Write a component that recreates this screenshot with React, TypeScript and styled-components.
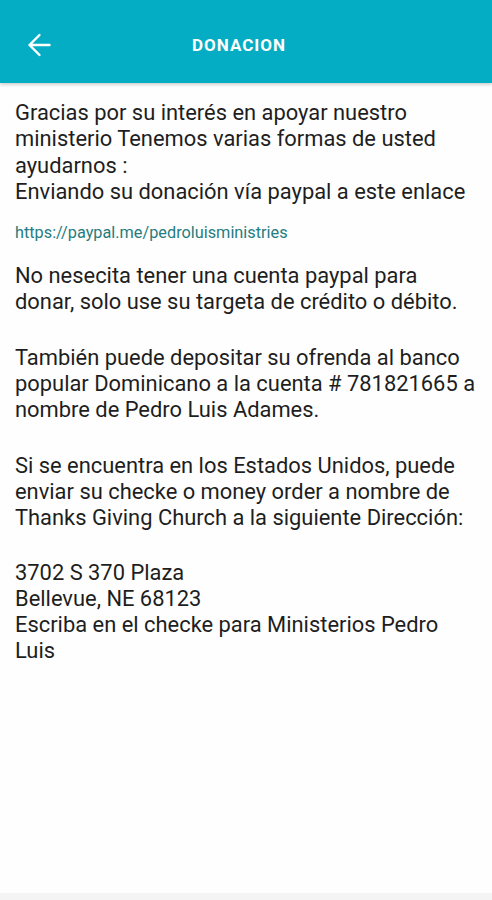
import React from "react";
import styled, { createGlobalStyle } from "styled-components";

const Global = createGlobalStyle`
  html, body { margin: 0; padding: 0; background: #fefefe; }
  body { font-family: Roboto, "Noto Sans", Arial, sans-serif; }
  * { box-sizing: border-box; }
`;

const Screen = styled.div`
  width: 492px;
  height: 900px;
  display: flex;
  flex-direction: column;
  background: #fefefe;
  overflow: hidden;
`;

const Toolbar = styled.header`
  height: 83px;
  flex: none;
  background: #04adc4;
  display: flex;
  align-items: center;
  padding: 7px 0 0 27px;
  box-shadow: 0 2px 3px rgba(0, 0, 0, 0.18);
  position: relative;
  z-index: 1;
`;

const BackButton = styled.button`
  width: 24px;
  height: 24px;
  padding: 0;
  border: none;
  background: transparent;
  display: flex;
  align-items: center;
  justify-content: center;
`;

const Title = styled.h1`
  margin: 0 0 0 141px;
  font-family: Roboto, Arial, sans-serif;
  font-weight: 700;
  font-size: 17px;
  letter-spacing: 1px;
  color: #ffffff;
`;

const Content = styled.main`
  flex: 1;
  padding: 17px 15px 0 15px;
`;

const Paragraph = styled.p<{ $gap?: number }>`
  margin: ${(p) => p.$gap ?? 0}px 0 0 0;
  font-family: Roboto, Arial, sans-serif;
  font-size: 21.9px;
  line-height: 26.3px;
  color: #1e1e1e;
`;

const Link = styled.a`
  display: block;
  margin-top: 18px;
  font-family: Roboto, Arial, sans-serif;
  font-size: 16.3px;
  line-height: 20px;
  color: #267c7e;
  text-decoration: none;
`;

const BottomBar = styled.div`
  height: 7px;
  flex: none;
  background: #f4f4f4;
`;

export default function App() {
  return (
    <Screen>
      <Global />
      <Toolbar>
        <BackButton aria-label="back">
          <svg width="24" height="24" viewBox="0 0 24 24" fill="none">
            <path
              d="M22.5 12H2.5M12.5 2L2.5 12l10 10"
              stroke="#ffffff"
              strokeWidth="2.4"
              strokeLinecap="round"
              strokeLinejoin="round"
            />
          </svg>
        </BackButton>
        <Title>DONACION</Title>
      </Toolbar>
      <Content>
        <Paragraph>
          Gracias por su interés en apoyar nuestro
          <br />
          ministerio Tenemos varias formas de usted
          <br />
          ayudarnos :
          <br />
          Enviando su donación vía paypal a este enlace
        </Paragraph>
        <Link href="#">https://paypal.me/pedroluisministries</Link>
        <Paragraph $gap={20}>
          No nesecita tener una cuenta paypal para
          <br />
          donar, solo use su targeta de crédito o débito.
        </Paragraph>
        <Paragraph $gap={29}>
          También puede depositar su ofrenda al banco
          <br />
          popular Dominicano a la cuenta # 781821665 a
          <br />
          nombre de Pedro Luis Adames.
        </Paragraph>
        <Paragraph $gap={29}>
          Si se encuentra en los Estados Unidos, puede
          <br />
          enviar su checke o money order a nombre de
          <br />
          Thanks Giving Church a la siguiente Dirección:
        </Paragraph>
        <Paragraph $gap={28}>
          3702 S 370 Plaza
          <br />
          Bellevue, NE 68123
          <br />
          Escriba en el checke para Ministerios Pedro
          <br />
          Luis
        </Paragraph>
      </Content>
      <BottomBar />
    </Screen>
  );
}
